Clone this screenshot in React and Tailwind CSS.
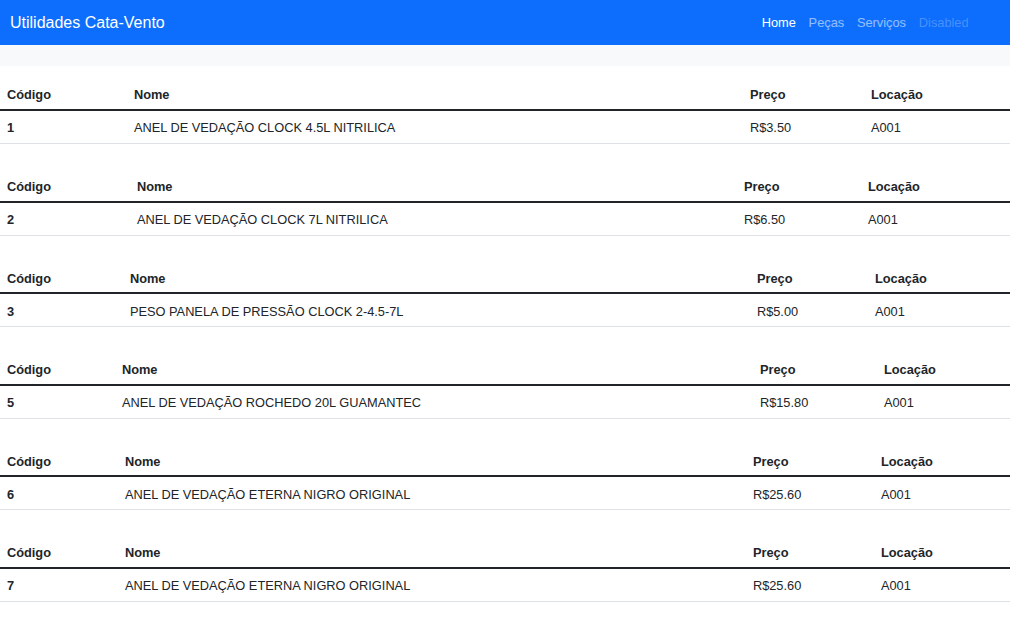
import React from "react";

const produtos = [
  { codigo: 1, nome: "ANEL DE VEDAÇÃO CLOCK 4.5L NITRILICA", preco: "R$3.50", locacao: "A001", cols: ["w-[127px]", "w-[616px]", "w-[121px]", "w-[146px]"] },
  { codigo: 2, nome: "ANEL DE VEDAÇÃO CLOCK 7L NITRILICA", preco: "R$6.50", locacao: "A001", cols: ["w-[130px]", "w-[607px]", "w-[124px]", "w-[149px]"] },
  { codigo: 3, nome: "PESO PANELA DE PRESSÃO CLOCK 2-4.5-7L", preco: "R$5.00", locacao: "A001", cols: ["w-[123px]", "w-[627px]", "w-[118px]", "w-[142px]"] },
  { codigo: 5, nome: "ANEL DE VEDAÇÃO ROCHEDO 20L GUAMANTEC", preco: "R$15.80", locacao: "A001", cols: ["w-[115px]", "w-[638px]", "w-[124px]", "w-[133px]"] },
  { codigo: 6, nome: "ANEL DE VEDAÇÃO ETERNA NIGRO ORIGINAL", preco: "R$25.60", locacao: "A001", cols: ["w-[118px]", "w-[628px]", "w-[128px]", "w-[136px]"] },
  { codigo: 7, nome: "ANEL DE VEDAÇÃO ETERNA NIGRO ORIGINAL", preco: "R$25.60", locacao: "A001", cols: ["w-[118px]", "w-[628px]", "w-[128px]", "w-[136px]"] },
];

const head = "pl-[6.9px] pr-[6.4px] pt-[8.4px] pb-[4.4px] text-left leading-[19.2px] font-bold";
const cell = "pl-[6.9px] pr-[6.4px] pt-[7.4px] pb-[5.4px] text-left leading-[19.2px]";

function ProdutoTable({ produto }) {
  return (
    <table className="w-full table-fixed border-collapse mb-[24.6px] text-[12.8px] text-[#212529]">
      <colgroup>
        {produto.cols.map((c, i) => (
          <col key={i} className={c} />
        ))}
      </colgroup>
      <thead>
        <tr className="border-b-2 border-[#212529]">
          <th className={head}>Código</th>
          <th className={head}>Nome</th>
          <th className={head}>Preço</th>
          <th className={head}>Locação</th>
        </tr>
      </thead>
      <tbody>
        <tr className="border-b border-[#dee2e6]">
          <th className={`${cell} font-bold`}>{produto.codigo}</th>
          <td className={cell}>{produto.nome}</td>
          <td className={cell}>{produto.preco}</td>
          <td className={cell}>{produto.locacao}</td>
        </tr>
      </tbody>
    </table>
  );
}

export default function App() {
  return (
    <div className="min-h-screen bg-white font-['Liberation_Sans',Arial,sans-serif]">
      {/* Navbar */}
      <nav className="h-[45px] bg-[#0d6efd] flex items-center pl-[10px] pr-[35px]">
        <span className="text-white text-[16px] leading-none">Utilidades Cata-Vento</span>
        <ul className="ml-auto flex items-center text-[12.8px]">
          <li className="px-[6.4px] text-white">Home</li>
          <li className="px-[6.4px] text-white/55">Peças</li>
          <li className="px-[6.4px] text-white/55">Serviços</li>
          <li className="px-[6.4px] text-white/25">Disabled</li>
        </ul>
      </nav>

      <div className="h-[21px] bg-[#f8f9fa]" />

      <div className="mt-[11px]">
        {produtos.map((p) => (
          <ProdutoTable key={p.codigo} produto={p} />
        ))}
      </div>
    </div>
  );
}
